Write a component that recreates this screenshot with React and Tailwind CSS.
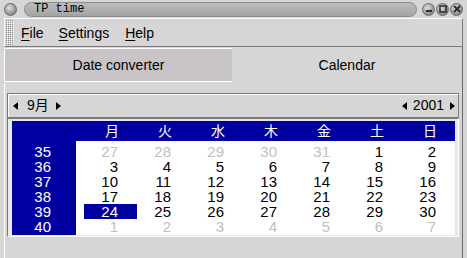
import React from "react";

const WEEKS = [
  { wk: 35, days: [[27, 0], [28, 0], [29, 0], [30, 0], [31, 0], [1, 1], [2, 1]] },
  { wk: 36, days: [[3, 1], [4, 1], [5, 1], [6, 1], [7, 1], [8, 1], [9, 1]] },
  { wk: 37, days: [[10, 1], [11, 1], [12, 1], [13, 1], [14, 1], [15, 1], [16, 1]] },
  { wk: 38, days: [[17, 1], [18, 1], [19, 1], [20, 1], [21, 1], [22, 1], [23, 1]] },
  { wk: 39, days: [[24, 1], [25, 1], [26, 1], [27, 1], [28, 1], [29, 1], [30, 1]] },
  { wk: 40, days: [[1, 0], [2, 0], [3, 0], [4, 0], [5, 0], [6, 0], [7, 0]] },
];

const DAY_NAMES = ["月", "火", "水", "木", "金", "土", "日"];

function LeftArrow() {
  return <span className="inline-block w-0 h-0 border-y-[4px] border-y-transparent border-r-[5px] border-r-black" />;
}

function RightArrow() {
  return <span className="inline-block w-0 h-0 border-y-[4px] border-y-transparent border-l-[5px] border-l-black" />;
}

function TitleButton({ children }) {
  return (
    <div className="w-[13px] h-[13px] rounded-full border border-[#6a6a6a] bg-[radial-gradient(circle_at_40%_35%,#e0e0e0,#8a8a8a_70%,#6a6a6a)] flex items-center justify-center">
      {children}
    </div>
  );
}

export default function App() {
  return (
    <div
      className="w-[467px] h-[258px] bg-[#d6d6d6] overflow-hidden flex flex-col text-black"
      style={{ fontFamily: '"Liberation Sans", "Noto Sans CJK JP", sans-serif' }}
    >
      {/* title bar */}
      <div className="h-[18px] flex items-center pl-[4px] pr-[4px] shrink-0">
        <TitleButton />
        <div className="ml-[7px] w-[393px] h-[15px] rounded-full border border-[#8c8c8c] bg-[linear-gradient(#bcbcbc,#a4a4a4)] flex items-center pl-[9px]">
          <span className="text-[12px] leading-none" style={{ fontFamily: '"Liberation Mono", monospace' }}>
            TP time
          </span>
        </div>
        <div className="ml-auto flex gap-[1px]">
          <TitleButton>
            <svg width="8" height="8" viewBox="0 0 8 8">
              <rect x="1" y="5" width="6" height="2" fill="#2a2a2a" />
            </svg>
          </TitleButton>
          <TitleButton>
            <svg width="8" height="8" viewBox="0 0 8 8">
              <rect x="1" y="1" width="6" height="6" fill="none" stroke="#2a2a2a" strokeWidth="1.5" />
            </svg>
          </TitleButton>
          <TitleButton>
            <svg width="8" height="8" viewBox="0 0 8 8">
              <path d="M1 1 L7 7 M7 1 L1 7" stroke="#2a2a2a" strokeWidth="1.8" />
            </svg>
          </TitleButton>
        </div>
      </div>

      <div className="flex-1 flex flex-col px-[4px] min-h-0">
        {/* menu bar */}
        <div className="h-[29px] shrink-0 flex items-center border-t border-l border-t-white border-l-white border-b border-r border-b-[#7a7a7a] border-r-[#7a7a7a]">
          <svg width="8" height="25" className="ml-[1px]">
            <defs>
              <pattern id="dots" width="2" height="2" patternUnits="userSpaceOnUse">
                <rect x="0" y="0" width="1" height="1" fill="#8a8a8a" />
                <rect x="1" y="1" width="1" height="1" fill="#ffffff" />
              </pattern>
            </defs>
            <rect x="0" y="0" width="8" height="25" fill="url(#dots)" />
          </svg>
          <div className="flex text-[14px] leading-none ml-[7px]">
            <span><span className="underline underline-offset-[2px]">F</span>ile</span>
            <span className="ml-[15px]"><span className="underline underline-offset-[2px]">S</span>ettings</span>
            <span className="ml-[16px]"><span className="underline underline-offset-[2px]">H</span>elp</span>
          </div>
        </div>

        {/* tabs */}
        <div className="h-[36px] shrink-0 flex items-end">
          <div className="w-[228px] h-[34px] mb-[1px] bg-[#c8c4c8] border-t border-l border-t-white border-l-white border-b border-b-white flex items-center justify-center text-[14px]">
            Date converter
          </div>
          <div className="flex-1 h-[36px] border-r border-r-[#6a6a6a] flex items-center justify-center text-[14px]">
            Calendar
          </div>
        </div>

        {/* page */}
        <div className="flex-1 border-l border-l-white border-r border-r-[#6a6a6a] pt-[10px] pl-[2px] pr-[3px]">
          {/* month / year header */}
          <div className="h-[25px] border border-[#7a7a7a] flex items-center justify-between pl-[5px] pr-[3px] text-[14px] shadow-[inset_1px_1px_0_#ffffff]">
            <div className="flex items-center">
              <LeftArrow />
              <span className="ml-[9px] mr-[7px]">9月</span>
              <RightArrow />
            </div>
            <div className="flex items-center gap-[6px]">
              <LeftArrow />
              <span>2001</span>
              <RightArrow />
            </div>
          </div>

          {/* calendar body */}
          <div className="border-l border-t border-l-[#7a7a7a] border-t-[#7a7a7a] border-r border-b border-r-white border-b-white bg-[#e8e8e8] pl-[4px] pt-[2px] pr-[3px] pb-[1px]">
            <div className="bg-[#0000a0] w-[443px] h-[114px] flex flex-col text-[15px]">
              <div className="h-[20px] flex items-center text-white">
                <div className="w-[64px]" />
                <div className="flex pl-[8px]">
                  {DAY_NAMES.map((d) => (
                    <div key={d} className="w-[53px] pr-[18px] text-right text-[14px] leading-[20px]">
                      {d}
                    </div>
                  ))}
                </div>
              </div>
              <div className="flex-1 flex">
                <div className="w-[64px] pt-[3px] text-white">
                  {WEEKS.map((w) => (
                    <div key={w.wk} className="h-[15px] leading-[15px] text-right pr-[25px]">
                      {w.wk}
                    </div>
                  ))}
                </div>
                <div className="flex-1 bg-white pt-[3px] pl-[8px]">
                  {WEEKS.map((w) => (
                    <div key={w.wk} className="h-[15px] flex">
                      {w.days.map(([n, cur], i) => {
                        const sel = w.wk === 39 && i === 0;
                        return (
                          <div
                            key={i}
                            className={
                              sel
                                ? "w-[53px] pr-[19px] text-right leading-[15px] bg-[#0000a0] text-white"
                                : cur
                                ? "w-[53px] pr-[19px] text-right leading-[15px] text-black"
                                : "w-[53px] pr-[19px] text-right leading-[15px] text-[#c0c0c0]"
                            }
                          >
                            {n}
                          </div>
                        );
                      })}
                    </div>
                  ))}
                </div>
              </div>
            </div>
          </div>
        </div>
      </div>
    </div>
  );
}
